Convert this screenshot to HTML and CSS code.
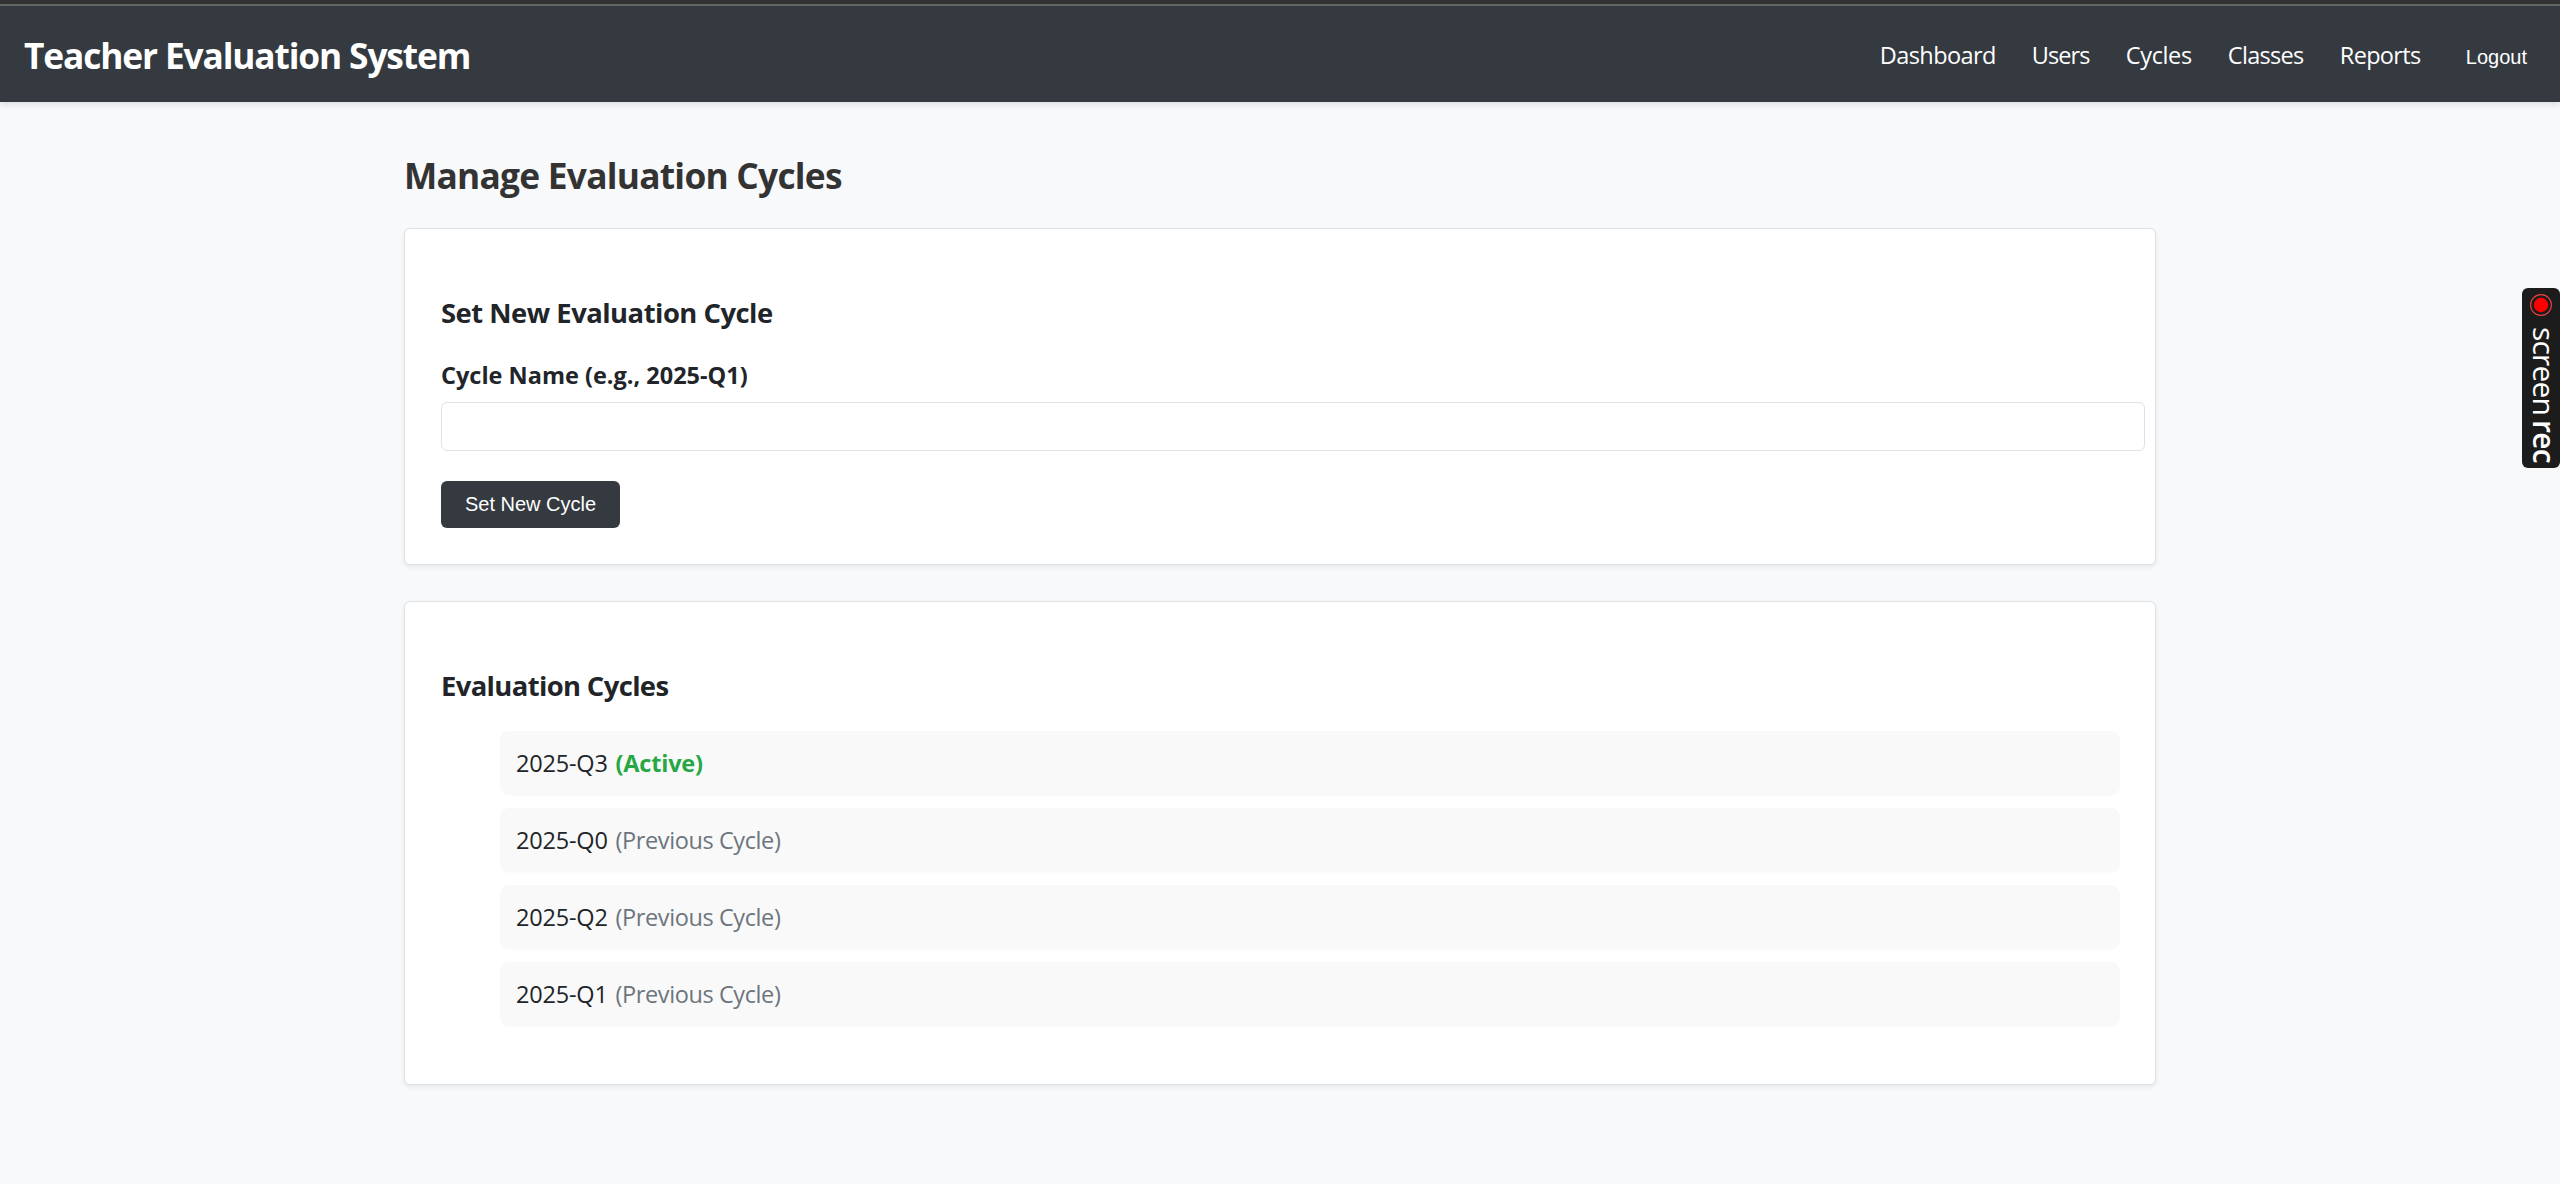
FILE: index.html
```
<!DOCTYPE html>
<html lang="en">
<head>
<meta charset="utf-8">
<title>Teacher Evaluation System</title>
<link rel="stylesheet" href="styles.css">
</head>
<body>
<div class="top-strip"></div>
<header class="navbar">
  <div class="brand">Teacher Evaluation System</div>
  <nav class="links">
    <a class="link dashboard">Dashboard</a>
    <a class="link users">Users</a>
    <a class="link cycles">Cycles</a>
    <a class="link classes">Classes</a>
    <a class="link reports">Reports</a>
    <button class="logout">Logout</button>
  </nav>
</header>
<main class="container">
  <h1 class="page-title">Manage Evaluation Cycles</h1>
  <section class="card form-card">
    <h3 class="card-title">Set New Evaluation Cycle</h3>
    <label class="label" for="cycle">Cycle Name (e.g., 2025-Q1)</label>
    <input class="input" id="cycle" type="text">
    <button class="submit">Set New Cycle</button>
  </section>
  <section class="card list-card">
    <h3 class="card-title">Evaluation Cycles</h3>
    <ul class="cycle-list">
      <li class="cycle">2025-Q3 <strong class="active">(Active)</strong></li>
      <li class="cycle">2025-Q0 <span class="previous">(Previous Cycle)</span></li>
      <li class="cycle">2025-Q2 <span class="previous">(Previous Cycle)</span></li>
      <li class="cycle">2025-Q1 <span class="previous">(Previous Cycle)</span></li>
    </ul>
  </section>
</main>
<aside class="recorder">
  <svg class="record-icon" width="22" height="22" viewBox="0 0 22 22"><circle cx="11" cy="11" r="10.4" fill="none" stroke="#f04040" stroke-width="1.1"/><circle cx="11" cy="11" r="7.2" fill="#f00"/></svg>
  <div class="recorder-name">screen<span class="rec">rec</span></div>
</aside>
</body>
</html>
```
FILE: styles.css
```
* { box-sizing: border-box; }
body {
  margin: 0;
  min-height: 1184px;
  background: #f8f9fb;
  color: #212529;
  font: 23.5px/36px "Open Sans", "Noto Sans", sans-serif;
}
.top-strip { height: 6px; background: #333; border-bottom: 2px solid #666; }
.navbar {
  display: flex;
  justify-content: space-between;
  align-items: center;
  height: 96px;
  padding: 2px 24px 0;
  background: #343a40;
  color: #fff;
  box-shadow: 0 3px 6px rgba(0, 0, 0, .1);
}
.brand { font-size: 35.3px; line-height: 54px; font-weight: 670; letter-spacing: -1.14px; }
.links { display: flex; align-items: baseline; gap: 36px; }
.link { padding-left: 1px; color: #fff; white-space: nowrap; }
.dashboard { width: 116px; letter-spacing: -.6px; }
.users { width: 58px; letter-spacing: -.95px; }
.cycles { width: 66px; letter-spacing: -.38px; }
.classes { width: 76px; letter-spacing: -.7px; }
.reports { width: 82px; letter-spacing: -.68px; }
.logout {
  padding: 0 9px;
  border: 0;
  background: none;
  color: #fff;
  font: 20px "Liberation Sans", Arial, sans-serif;
}
.container { width: 1752px; margin: 0 auto; padding-top: 46px; }
.page-title {
  margin: 0 0 26px;
  color: #333;
  font-size: 35.3px;
  line-height: 54px;
  font-weight: 670;
  letter-spacing: -.75px;
}
.card {
  padding: 0 36px;
  margin-bottom: 36px;
  border: 1px solid #dee2e6;
  border-radius: 6px;
  background: #fff;
  box-shadow: 0 2px 5px rgba(0, 0, 0, .08);
}
.form-card { height: 337px; }
.list-card { height: 484px; }
.card-title {
  margin: 0;
  padding-top: 63px;
  font-size: 27.4px;
  line-height: 42px;
  font-weight: 670;
  letter-spacing: -.5px;
}
.form-card .card-title { margin-bottom: 23px; }
.list-card .card-title { margin-bottom: 24px; letter-spacing: -.62px; }
.label { display: block; margin-bottom: 9px; font-weight: 670; letter-spacing: 0; }
.input {
  display: block;
  width: 1704px;
  height: 49px;
  margin-bottom: 30px;
  padding: 0 12px;
  border: 1px solid #dee2e6;
  border-radius: 6px;
  background: #fff;
}
.submit {
  display: block;
  width: 179px;
  height: 47px;
  padding: 0;
  border: 0;
  border-radius: 6px;
  background: #343a40;
  color: #fff;
  font: 20px "Liberation Sans", Arial, sans-serif;
}
.cycle-list {
  display: flex;
  flex-direction: column;
  gap: 13px;
  margin: 0 -1px 0 0;
  padding: 0 0 0 59px;
  list-style: none;
}
.cycle {
  height: 64px;
  padding: 0 16px;
  border-radius: 9px;
  background: #f9f9f9;
  line-height: 64px;
  letter-spacing: -.2px;
  box-shadow: 0 1px 2px rgba(0, 0, 0, .02);
}
.active { margin-left: 2px; color: #28a745; font-weight: 670; }
.previous { margin-left: 2px; color: #6c757d; letter-spacing: -.4px; }
.recorder {
  position: absolute;
  top: 288px;
  right: 0;
  display: flex;
  flex-direction: column;
  align-items: center;
  width: 38px;
  height: 180px;
  padding-top: 6px;
  border-radius: 6px;
  background: #1c1c1c;
  color: #fff;
}
.recorder-name {
  margin-top: 11px;
  padding-left: 5px;
  writing-mode: vertical-rl;
  font-size: 30px;
  line-height: 38px;
  letter-spacing: -.8px;
  white-space: nowrap;
}
.rec { margin-top: 5px; font-weight: 600; }
```
